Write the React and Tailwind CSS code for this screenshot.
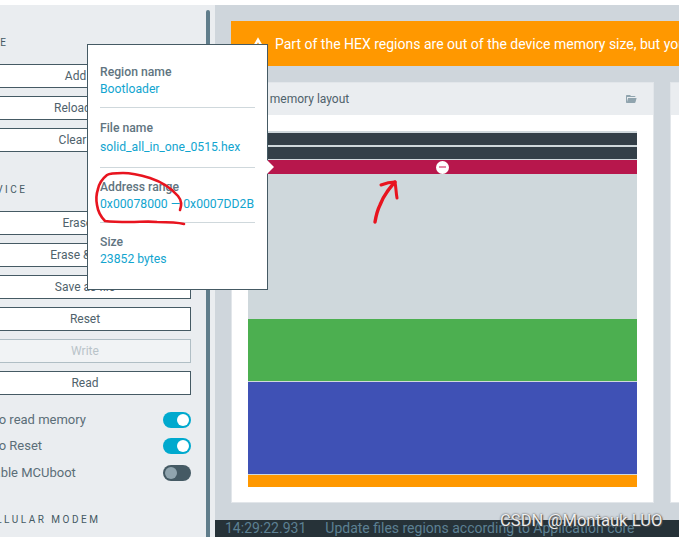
const font = { fontFamily: "Roboto, sans-serif" };

function SideButton({ children, disabled }) {
  return (
    <button
      type="button"
      className={`h-6 w-[212px] shrink-0 border text-center text-xs leading-[22px] ${
        disabled
          ? "border-[#b0bec5] bg-[#f1f3f5] text-[#b9c3c9]"
          : "border-[#455a64] bg-white text-[#4f626c]"
      }`}
    >
      {children}
    </button>
  );
}

function SectionLabel({ children, className }) {
  return (
    <div className={`h-4 text-[10px] leading-[18px] tracking-[2.5px] text-[#455a64] whitespace-nowrap ${className}`}>
      {children}
    </div>
  );
}

function Toggle({ label, on, className }) {
  return (
    <div className={`flex h-4 w-[212px] items-center justify-between ${className}`}>
      <span className="text-[13px] text-[#5b6e78] whitespace-nowrap">{label}</span>
      <span
        className={`flex h-4 w-7 items-center rounded-full px-0.5 ${
          on ? "justify-end bg-[#00a9ce]" : "justify-start bg-[#455a64]"
        }`}
      >
        <span className={`h-3 w-3 rounded-full ${on ? "bg-white" : "bg-[#90a4ae]"}`} />
      </span>
    </div>
  );
}

function InfoRow({ label, value, className }) {
  return (
    <div className={className}>
      <div className="text-[12.2px] leading-4 font-medium text-[#607480]">{label}</div>
      <div className="mt-px text-[12.2px] leading-4 text-[#12a5cf] whitespace-nowrap">{value}</div>
    </div>
  );
}

function Card({ children, className }) {
  return (
    <div className={`h-[421px] shrink-0 border border-[#e2e6ea] bg-white ${className}`}>
      {children}
    </div>
  );
}

export default function App() {
  return (
    <div style={font} className="relative h-[537px] w-[679px] overflow-hidden bg-white">
      <div className="flex h-full pt-[5px]">
        {/* sidebar */}
        <div className="relative h-full w-[215px] shrink-0 overflow-hidden bg-[#eaedf0]">
          <div className="-ml-[21px] flex flex-col pt-[29px]">
            <SectionLabel className="mb-3.5">FILE</SectionLabel>
            <div className="flex flex-col gap-2">
              <SideButton>Add file</SideButton>
              <SideButton>Reload files</SideButton>
              <SideButton>Clear files</SideButton>
            </div>
            <SectionLabel className="mt-[29px] mb-3.5">DEVICE</SectionLabel>
            <div className="flex flex-col gap-2">
              <SideButton>Erase all</SideButton>
              <SideButton>Erase &amp; write</SideButton>
              <SideButton>Save as file</SideButton>
              <SideButton>Reset</SideButton>
              <SideButton disabled>Write</SideButton>
              <SideButton>Read</SideButton>
            </div>
            <Toggle className="mt-[17px]" label="Auto read memory" on />
            <Toggle className="mt-2.5" label="Auto Reset" on />
            <Toggle className="mt-[11px]" label="Enable MCUboot" />
            <SectionLabel className="mt-[30px]">CELLULAR MODEM</SectionLabel>
          </div>
          <div className="absolute top-[5px] bottom-0 left-[206px] w-1 rounded-t-full bg-[#607d8b]" />
        </div>

        {/* main */}
        <div className="flex min-w-0 flex-1 flex-col bg-[#cfd6dc]">
          <div className="flex flex-1 flex-col gap-4 overflow-hidden pt-4 pl-4">
            <div className="flex h-[45px] w-[600px] shrink-0 items-center gap-[9px] bg-[#ff9800] pl-[19px] text-sm text-white whitespace-nowrap">
              <svg viewBox="0 0 24 24" className="h-4 w-4 shrink-0 fill-white">
                <path d="M13 14H11V10H13M13 18H11V16H13M1 21H23L12 2L1 21Z" />
              </svg>
              Part of the HEX regions are out of the device memory size, but you can still program them
            </div>
            <div className="flex gap-4">
              <Card className="w-[423px]">
                <div className="flex h-8 items-center justify-between bg-[#eaedf0] pr-4 pl-4 text-xs text-[#4f626c]">
                  <span>File memory layout</span>
                  <svg viewBox="0 0 24 24" className="h-3 w-3 fill-[#90a4ae]">
                    <path d="M19,20H4C2.89,20 2,19.1 2,18V6C2,4.89 2.89,4 4,4H10L12,6H19A2,2 0 0,1 21,8H21L4,8V18L6.14,10H23.21L20.93,18.5C20.7,19.37 19.92,20 19,20Z" />
                  </svg>
                </div>
                <div className="p-4">
                  <div className="flex h-[356px] flex-col bg-[#cfd8dc] pt-0.5">
                    <div className="h-3 bg-[#333f48]" />
                    <div className="mt-0.5 h-3 bg-[#333f48]" />
                    <div className="relative mt-px flex h-3.5 items-center justify-center bg-[#b7174c]">
                      <span className="flex h-[13px] w-[13px] items-center justify-center rounded-full bg-white">
                        <span className="h-0.5 w-[7px] bg-[#e58aa8]" />
                      </span>
                    </div>
                    <div className="h-[145px]" />
                    <div className="h-[62px] bg-[#4caf50]" />
                    <div className="mt-px h-[92px] bg-[#3f51b5]" />
                    <div className="mt-px h-3 bg-[#ff9800]" />
                  </div>
                </div>
              </Card>
              <Card className="w-[300px]">
                <div className="h-8 bg-[#eaedf0]" />
              </Card>
            </div>
          </div>
          <div className="flex h-[17px] shrink-0 items-center gap-[19px] bg-[#263238] pl-2.5 text-sm leading-[17px] text-[#5c8093] whitespace-nowrap">
            <span>14:29:22.931</span>
            <span>Update files regions according to Application core</span>
          </div>
        </div>
      </div>

      {/* region popover */}
      <div className="absolute top-11 left-[87px] h-[246px] w-[181px] border border-[#455a64] bg-white pt-[19px] pl-3 pr-3">
        <InfoRow label="Region name" value="Bootloader" />
        <div className="mt-2.5 h-px bg-[#cfd8dc]" />
        <InfoRow className="mt-3" label="File name" value={<span className="mt-[3px] block">solid_all_in_one_0515.hex</span>} />
        <div className="mt-3 h-px bg-[#cfd8dc]" />
        <InfoRow className="mt-[11px]" label="Address range" value="0x00078000 — 0x0007DD2B" />
        <div className="mt-2.5 h-px bg-[#cfd8dc]" />
        <InfoRow className="mt-[11px]" label="Size" value="23852 bytes" />
        <div className="absolute top-[115px] left-full h-0 w-0 border-y-[7px] border-l-[7px] border-y-transparent border-l-white" />
      </div>

      {/* hand drawn annotations */}
      <svg viewBox="0 0 679 537" className="pointer-events-none absolute inset-0 h-[537px] w-[679px]">
        <g fill="none" stroke="#e8141f" strokeLinecap="round" strokeLinejoin="round">
          <path
            strokeWidth="2.6"
            d="M180 210 C182 205 182 201 178 196 C172 189 162 182 150 178 C140 175 131 173 123 173 C115 173 110 173 107 175 C102 179 99 184 98 189 C96 195 96 200 97 205 C98 212 101 217 105 221 C113 222 121 222 130 222 C140 222 149 221 157 222 C167 222 176 222 184 224"
          />
          <path strokeWidth="3.4" d="M375 222 C376 216 377 211 380 205 C382 200 384 196 387 192 C390 188 392 185 395 182" />
          <path strokeWidth="3" d="M381 185 C386 183 390 182 395 182 C396 187 396 193 397 198" />
        </g>
      </svg>

      {/* watermark */}
      <div
        className="absolute top-[512px] left-[500px] text-[16.6px] leading-[18px] text-white/90 whitespace-nowrap"
        style={{ textShadow: "0 0 2px #333, 1px 1px 1px #555" }}
      >
        CSDN @Montauk LUO
      </div>
    </div>
  );
}
